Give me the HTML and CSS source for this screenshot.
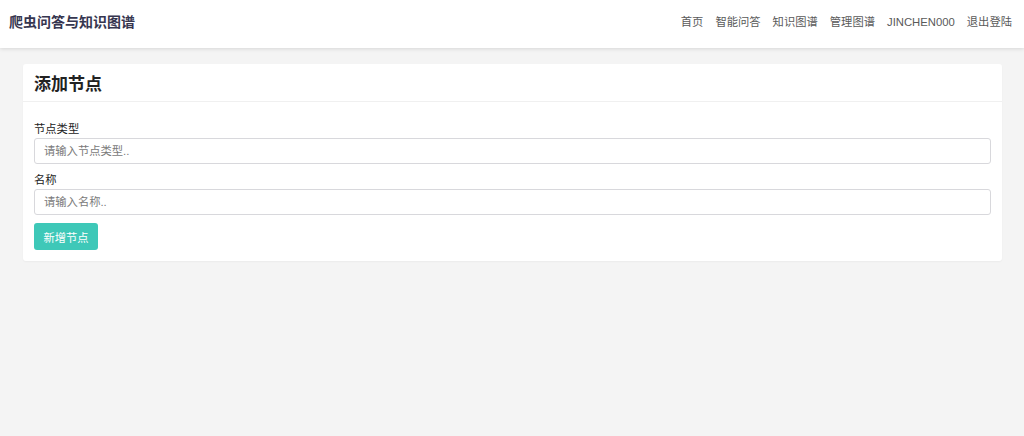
FILE: index.html
```html
<!DOCTYPE html>
<html lang="zh">
<head>
<meta charset="utf-8">
<title>添加节点</title>
<link rel="stylesheet" href="styles.css">
</head>
<body>
<header class="navbar">
  <div class="brand">爬虫问答与知识图谱</div>
  <nav class="nav">
    <a href="#">首页</a>
    <a href="#">智能问答</a>
    <a href="#">知识图谱</a>
    <a href="#">管理图谱</a>
    <a href="#">JINCHEN000</a>
    <a href="#">退出登陆</a>
  </nav>
</header>
<main class="main">
  <section class="card">
    <div class="card-header">添加节点</div>
    <form class="card-body">
      <label class="label">节点类型</label>
      <input class="input" type="text" placeholder="请输入节点类型..">
      <label class="label">名称</label>
      <input class="input" type="text" placeholder="请输入名称..">
      <div><button class="btn" type="button">新增节点</button></div>
    </form>
  </section>
</main>
</body>
</html>
```
FILE: styles.css
```css
* { box-sizing: border-box; }
html, body { margin: 0; padding: 0; }
body {
  background: #f4f4f4;
  font-family: "Liberation Sans", "Noto Sans CJK SC", sans-serif;
  color: #222;
  height: 436px;
}
.navbar {
  height: 48px;
  background: #fff;
  box-shadow: 0 1px 4px rgba(0,0,0,0.12);
  display: flex;
  align-items: center;
  justify-content: space-between;
  padding: 0 12px 7px 9px;
}
.brand {
  font-family: "Noto Sans CJK SC", sans-serif;
  font-size: 14px;
  font-weight: bold;
  color: #36364f;
}
.nav {
  display: flex;
  align-items: baseline;
  gap: 12px;
}
.nav a {
  font-size: 11.3px;
  color: #5a5a5a;
  text-decoration: none;
}
.main {
  padding: 16px 22px 0 23px;
}
.card {
  background: #fff;
  border-radius: 3px;
  box-shadow: 0 1px 2px rgba(0,0,0,0.04);
}
.card-header {
  height: 38px;
  display: flex;
  align-items: center;
  padding: 0 11px;
  font-size: 17px;
  font-weight: bold;
  color: #222;
  border-bottom: 1px solid #f0f0f0;
}
.card-body {
  margin: 0;
  padding: 19px 11px 11px 11px;
  display: flex;
  flex-direction: column;
}
.label {
  font-size: 11.3px;
  color: #222;
  line-height: 17px;
}
.input {
  height: 26px;
  border: 1px solid #d8d8dc;
  border-radius: 3px;
  padding: 0 9px;
  font-size: 11.3px;
  font-family: inherit;
  margin: 0 0 8px 0;
  color: #333;
}
.input::placeholder { color: #7a7a7a; }
.btn {
  height: 27px;
  width: 64px;
  border: none;
  border-radius: 3px;
  background: #3ec8b8;
  color: #fff;
  font-size: 11.3px;
  font-family: inherit;
  padding: 0;
}
```
